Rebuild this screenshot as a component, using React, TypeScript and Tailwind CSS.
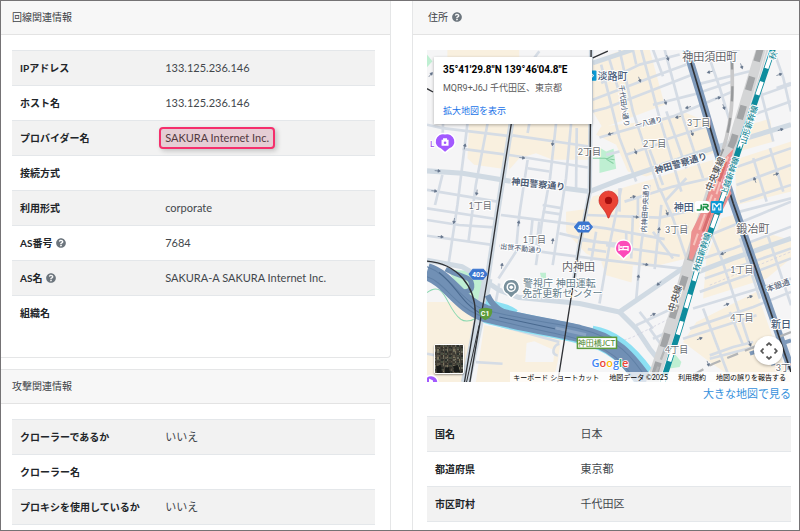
import React from "react";
import { FaQuestionCircle } from "react-icons/fa";

type Row = {
  label: string;
  value?: string;
  help?: boolean;
  highlight?: boolean;
};

const LINE_ROWS: Row[] = [
  { label: "IPアドレス", value: "133.125.236.146" },
  { label: "ホスト名", value: "133.125.236.146" },
  { label: "プロバイダー名", value: "SAKURA Internet Inc.", highlight: true },
  { label: "接続方式" },
  { label: "利用形式", value: "corporate" },
  { label: "AS番号", value: "7684", help: true },
  { label: "AS名", value: "SAKURA-A SAKURA Internet Inc.", help: true },
  { label: "組織名" },
];

const ATTACK_ROWS: Row[] = [
  { label: "クローラーであるか", value: "いいえ" },
  { label: "クローラー名" },
  { label: "プロキシを使用しているか", value: "いいえ" },
];

const ADDRESS_ROWS: Row[] = [
  { label: "国名", value: "日本" },
  { label: "都道府県", value: "東京都" },
  { label: "市区町村", value: "千代田区" },
];

// Map geometry is drawn at three units per pixel.
const BEIGE_BLOCKS = [
  "85,15 300,15 300,40 85,40",
  "150,237 272,237 250,372 165,360 145,340",
  "278,237 508,237 508,345 400,345 350,325 300,340 270,375 268,300",
  "520,110 520,50 610,15 690,15 735,180 550,250 520,200",
  "545,245 640,235 800,205 870,235 885,300 880,325 680,395 625,380 590,300 530,270",
  "440,500 500,492 520,455 690,405 880,345 885,410 800,640 700,665 560,655 500,625 440,560",
  "545,650 640,662 636,712 560,690",
  "970,245 1050,222 1062,290 955,320",
  "945,345 1113,290 1113,440 950,480",
  "905,520 940,510 985,590 1060,570 1113,585 1113,640 1040,700 850,760 860,640",
  "830,830 1010,740 1060,880 1113,1011 960,1011 870,950 790,890",
  "24,770 110,770 165,812 165,900 130,1011 24,1011",
  "195,840 425,880 415,950 400,1011 170,1011",
];

const MINOR_ROADS = [
  // west grid
  "M145,237 L115,480 L88,660",
  "M205,237 L170,420 L148,590",
  "M72,237 L70,300",
  "M70,390 L48,480",
  "M330,237 L325,265",
  "M410,237 L392,400 L368,530 L350,660",
  "M455,237 L440,400 L400,660",
  "M360,20 L330,60",
  "M325,345 L300,510 L290,620 L238,700",
  "M340,520 L330,620",
  "M360,530 L352,600",
  "M472,250 L470,430",
  "M24,435 L235,470",
  "M24,490 L230,522",
  "M24,525 L120,540 L225,547",
  "M24,572 L225,600",
  "M24,240 L70,250 L280,275",
  "M130,312 L280,332 L505,368",
  "M280,272 L510,305",
  "M325,370 L390,380",
  "M370,480 L430,490",
  "M370,500 L425,508",
  "M245,510 L400,530 L560,550 L735,582",
  "M240,602 L400,625 L560,645 L800,672",
  "M420,565 L530,590 L620,600",
  // south of the main street
  "M605,430 L570,600 L540,775",
  "M690,420 L665,600 L650,760",
  "M725,480 L705,672",
  "M530,560 L515,650",
  "M485,585 L620,600 L620,560",
  "M600,430 L600,500",
  "M640,510 L635,640",
  "M500,510 L720,518 L800,500",
  "M560,600 L780,632",
  "M505,612 L560,620",
  "M760,640 L700,560",
  "M720,430 L760,520 L800,640",
  "M800,400 L735,470",
  "M615,470 L760,425 L870,400",
  "M655,455 L655,510",
  // north centre
  "M545,60 L600,280 L650,410",
  "M600,15 L640,200 L720,440",
  "M665,15 L720,220 L785,440",
  "M735,15 L790,220 L850,400",
  "M640,15 L650,60",
  "M570,45 L595,130",
  "M520,165 L690,100 L800,60",
  "M545,115 L660,60 L780,30",
  "M520,200 L560,190 L740,120 L830,85",
  "M540,278 L760,215 L870,170 L940,140",
  "M700,15 L730,95",
  "M720,290 L860,245",
  "M620,330 L740,290",
  "M860,15 L900,130 L930,230",
  "M810,30 L960,15",
  "M830,120 L990,80",
  "M700,180 L820,150 L940,110",
  "M560,330 L600,320",
  "M740,200 L800,370",
  "M690,315 L730,420",
  // east of the tracks
  "M1070,130 L1113,115",
  "M1060,15 L1090,100 L1113,200",
  "M1000,160 L1113,120",
  "M985,215 L1113,170",
  "M1020,130 L1060,290",
  "M940,370 L1113,310",
  "M950,420 L1113,360",
  "M960,470 L1113,420",
  "M1000,340 L1040,470",
  "M1050,310 L1090,440",
  "M960,500 L1113,460",
  "M870,570 L1113,470",
  "M850,640 L940,610 L1113,545",
  "M855,700 L1113,610",
  "M840,740 L980,690 L1113,640",
  "M820,790 L1113,700",
  "M810,850 L1000,785 L1113,740",
  "M790,880 L900,845 L1010,810",
  "M870,940 L1060,890",
  "M860,530 L905,640 L990,900",
  "M960,580 L1020,760",
  "M850,790 L930,1000",
  "M1040,560 L1113,780",
  "M930,800 L970,900",
  "M870,930 L940,905 L1000,890",
  // south
  "M650,840 L800,770",
  "M690,850 L740,920",
  "M700,880 L790,840",
  "M660,800 L700,850",
  "M24,925 L50,930",
  "M170,950 L250,955",
  "M240,840 L420,890",
  "M420,895 C400,900 395,930 415,930",
  "M240,715 L230,770",
];

const MAJOR_ROADS = [
  "M24,378 L130,385 L280,410 L510,440 L600,405 L880,310 L1113,240",
  "M210,715 L240,735 L300,757 L480,775 L600,800 L680,745 L810,655 L850,580",
  "M600,800 L650,850 L690,910 L730,960",
  "M810,690 L940,640 L1113,580",
  "M24,645 L130,665 L215,715",
];

const ARROWS: [number, number, number][] = [
  [56, 378, 5], [46, 438, 6], [65, 575, 6], [309, 339, 6], [137, 305, -80], [400, 295, 98], [173, 443, 98],
  [105, 528, 98], [298, 535, -82], [400, 588, -82], [248, 662, -82], [640, 456, -14], [649, 516, 4], [678, 658, 8],
  [718, 555, -82], [656, 697, -82], [744, 40, 70], [660, 105, 70], [737, 172, 70], [573, 267, 165], [648, 320, 70],
  [775, 217, 165], [805, 188, 165], [870, 82, 165], [895, 160, -15], [912, 187, 70], [817, 265, 70], [965, 65, 70],
  [1078, 90, -18], [1082, 255, -16], [1005, 405, -110], [1068, 388, -16], [742, 503, 70], [800, 545, 70], [910, 625, 160],
  [718, 715, 140], [700, 808, -25], [840, 880, -20], [920, 778, -20], [865, 955, 70], [990, 895, 70], [990, 755, -20],
  [35, 90, -50],
];

type MapLabelProps = {
  x: number;
  y: number;
  text: string;
  rotate?: number;
  className?: string;
};

const MapLabel: React.FC<MapLabelProps> = ({ x, y, text, rotate = 0, className = "text-[9px] fill-[#6b6f75]" }) => (
  <text
    x={x}
    y={y}
    textAnchor="middle"
    dominantBaseline="central"
    transform={`rotate(${rotate} ${x} ${y})`}
    stroke="#fff"
    strokeWidth={2}
    strokeLinejoin="round"
    paintOrder="stroke"
    className={className}
  >
    {text}
  </text>
);

const CHOME: [number, number, string][] = [
  [271, 73, "3丁目"], [227, 94, "2丁目"], [162, 102, "2丁目"], [53, 156, "1丁目"], [107, 189, "1丁目"],
  [249, 179, "3丁目"], [314, 219, "1丁目"], [314, 267, "4丁目"], [249, 299, "4丁目"], [355, 317, "3丁"],
];

const AREA = "text-[11px] fill-[#5f6368]";
const STREET = "text-[9px] font-bold fill-[#4b5b73]";
const LANE = "text-[7px] font-medium fill-[#5d6b80]";
const RAIL = "text-[9px] font-medium fill-[#555]";
const SHINKANSEN = "text-[8px] font-medium fill-[#1a8a98]";

const MapCanvas: React.FC = () => (
  <svg viewBox="0 0 363 332" preserveAspectRatio="xMidYMid slice" className="block h-[332px] w-full" aria-hidden="true">
    <rect width="363" height="332" fill="#f5f5f6" />
    <g transform="scale(0.33333) translate(-24 -15)" fill="none" strokeLinejoin="round">
      {BEIGE_BLOCKS.map((points) => (
        <polygon key={points} points={points} fill="#f9f0df" />
      ))}
      <path d="M322,893 L345,888 L405,915 L402,950 L318,950 Z" fill="#f5f5f6" />

      {/* parks */}
      <g fill="#bfefd2">
        <path d="M540,308 L560,320 L582,312 L590,372 L540,384 Z" />
        <path d="M85,672 L180,680 L190,700 L182,775 L130,745 Z" />
        <path d="M24,30 L40,50 L24,68 Z" />
        <path d="M362,683 L380,683 L380,702 L366,700 Z" />
        <path d="M765,925 L785,950 L780,965 L745,970 Z" />
      </g>
      <path d="M520,340 H555 L585,345 M560,343 L582,332 M560,343 L582,356" stroke="#85cfa2" strokeWidth="3" />

      <g stroke="#d5dce5" strokeWidth="8">
        {MINOR_ROADS.map((d) => (
          <path key={d} d={d} />
        ))}
      </g>
      <g stroke="#d0dae3" strokeWidth="15">
        {MAJOR_ROADS.map((d) => (
          <path key={d} d={d} />
        ))}
      </g>
      <g stroke="#d0dae3" strokeWidth="20">
        <path d="M282,200 L235,500 L205,700 L145,1011" strokeWidth="17" />
        <path d="M205,700 L178,830 L140,1011" strokeWidth="30" />
        <path d="M515,15 L511,440 L480,600 L458,740" strokeWidth="13" />
        <path d="M520,55 L640,15" strokeWidth="14" />
      </g>
      <path d="M600,890 L640,875 L760,815 M870,720 L1113,620" stroke="#ccd" strokeWidth="2" strokeDasharray="8 6" />

      {/* river and expressway */}
      <path d="M80,672 C130,700 160,690 158,725 C156,742 130,742 122,735" stroke="#7190b3" strokeWidth="15" />
      <path d="M24,742 C80,700 80,790 125,822 C140,832 155,828 172,818" stroke="#8bd8b0" strokeWidth="3" />
      <path d="M200,770 C260,785 275,790 290,802 M520,850 C590,860 650,920 690,975" stroke="#8ce0f3" strokeWidth="18" />
      <path d="M200,806 C320,840 420,850 480,868 C580,888 630,935 690,1030" stroke="#8ce0f3" strokeWidth="55" />
      <path d="M24,680 C90,700 120,780 200,805 C320,835 420,850 480,865 C580,885 625,935 690,1030" stroke="#7190b5" strokeWidth="52" />
      <path d="M205,750 C222,785 240,795 275,812" stroke="#7190b3" strokeWidth="18" />
      <path
        d="M24,665 C95,690 125,770 200,795 C320,825 420,835 480,850 C590,875 640,930 700,1030 M24,695 C80,712 110,790 195,815 C320,850 410,862 470,880 C570,905 610,945 665,1030"
        stroke="#6080a6"
        strokeWidth="3"
      />
      <path d="M60,682 C110,720 130,775 180,802 M240,815 L440,858" stroke="#48688e" strokeWidth="3" />
      <path d="M408,848 L500,868" stroke="#8aa4c4" strokeWidth="9" />

      {/* highway to the east */}
      <path d="M800,15 L845,160 L892,320 L940,475 L1025,720 L1113,970" stroke="#7f9abb" strokeWidth="23" />
      <path d="M990,925 L1113,885 M1050,900 L1060,960" stroke="#7f9abb" strokeWidth="12" />

      {/* subway lines */}
      <g stroke="#303236" strokeWidth="4">
        <path d="M282,200 L235,500 L205,700 L152,1011" />
        <path d="M24,648 C110,655 175,720 168,820 L136,1011" />
        <path d="M180,840 L142,1011" strokeWidth="3" />
        <path d="M515,15 L511,440 L480,600 L415,1011" />
        <path d="M520,40 L565,20 M24,132 L42,142" />
        <path d="M805,25 L892,320 L940,475 L1025,720 L1113,980" strokeWidth="5" />
      </g>

      {/* JR tracks */}
      <path d="M936,15 C936,120 950,210 895,360" stroke="#c9c9ca" strokeWidth="11" />
      <path d="M936,30 C936,120 950,210 895,360" stroke="#97999b" strokeWidth="7" strokeDasharray="45 50" />
      <path d="M1028,10 L940,300 L880,430 L810,650 L765,810 L695,1020" stroke="#d4d5d6" strokeWidth="36" />
      <path d="M1022,10 L940,290 L880,430 L810,650 L760,810 L695,1020" stroke="#a2a4a6" strokeWidth="20" strokeDasharray="42 48" />
      <path d="M1040,10 L955,310 M830,670 L760,900" stroke="#e8e9ea" strokeWidth="3" />
      <path d="M736,910 L695,1020 M1113,860 L880,955 L800,1000" stroke="#b3b5b7" strokeWidth="7" strokeDasharray="35 22" />
      <path d="M942,310 L918,405 L935,445 L890,530 L870,585 L832,612 L817,645 L808,640 L815,560 L855,480 L888,370 Z" fill="#ec9291" />
      <path d="M925,335 L880,440 L822,600 M905,400 L855,560" stroke="#f7c3bd" strokeWidth="6" strokeDasharray="50 12" />
      <path d="M882,470 L850,560 M918,350 L898,410" stroke="#d86d70" strokeWidth="9" />
      <path d="M1062,5 L960,305 L915,440 L835,665 L780,850 L726,1020" stroke="#0d8c9d" strokeWidth="17" />
      <path d="M1062,5 L960,305 L915,440 L835,665 L780,850 L726,1020" stroke="#fff" strokeWidth="12" strokeDasharray="42 42" strokeDashoffset="-28" />
      <path d="M960,305 L915,440" stroke="#0d8c9d" strokeWidth="5" />

      {ARROWS.map(([x, y, angle]) => (
        <path
          key={`${x}-${y}`}
          d="M-9,0 H5 M1,-4 L8,0 L1,4 Z"
          transform={`translate(${x} ${y}) rotate(${angle})`}
          fill="#64748b"
          stroke="#64748b"
          strokeWidth="2"
        />
      ))}
    </g>

    <g>
      {CHOME.map(([x, y, text]) => (
        <MapLabel key={`${x}-${y}`} x={x} y={y} text={text} />
      ))}
      <MapLabel x={185} y={26} text="淡路町" className="text-[10px] font-medium fill-[#465a78]" />
      <MapLabel x={282} y={7} text="神田須田町" className={AREA} />
      <MapLabel x={325} y={178} text="鍛冶町" className={AREA} />
      <MapLabel x={151} y={216} text="内神田" className={AREA} />
      <MapLabel x={353} y={274} text="新日" className="text-[10px] font-medium fill-[#465a78]" />
      <MapLabel x={132} y={233} text="警視庁 神田運転" className="text-[10px] fill-[#657d8a]" />
      <MapLabel x={135} y={243} text="免許更新センター" className="text-[10px] fill-[#657d8a]" />
      <MapLabel x={111} y={134} text="神田警察通り" rotate={6} className={STREET} />
      <MapLabel x={253} y={113} text="神田警察通り" rotate={-16} className={STREET} />
      <MapLabel x={221} y={72} text="一八通り" rotate={-14} className={LANE} />
      <MapLabel x={197} y={56} text="千代田小通り" rotate={82} className={LANE} />
      <MapLabel x={217} y={158} text="内神田中央通り" rotate={-87} className={LANE} />
      <MapLabel x={94} y={198} text="出世不動通り" rotate={6} className={LANE} />
      <MapLabel x={350} y={235} text="本銀通" rotate={-20} className="text-[8px] font-medium fill-[#5d6b80]" />
      <MapLabel x={287} y={124} text="中央東線" rotate={-67} className={RAIL} />
      <MapLabel x={247} y={248} text="中央線" rotate={-73} className={RAIL} />
      <MapLabel x={321} y={75} text="山形新幹線" rotate={-72} className={SHINKANSEN} />
      <MapLabel x={302} y={126} text="上越新幹線" rotate={-71} className={SHINKANSEN} />
      <MapLabel x={274} y={202} text="秋田新幹線" rotate={-72} className={SHINKANSEN} />
      <MapLabel x={345} y={6} text="秋" rotate={-70} className={SHINKANSEN} />
      <MapLabel x={5} y={94} text="L" className="text-[8px] font-medium fill-[#9a4de8]" />
    </g>

    {/* station marks */}
    <rect x="163" y="21" width="6" height="10" rx="1" fill="#0c9ad6" />
    <path d="M164 24 L166 26 L164 28" stroke="#fff" fill="none" />
    <MapLabel x={256} y={157} text="神田" className="text-[10px] font-medium fill-[#465a78]" />
    <rect x="267" y="151" width="15" height="12" rx="3" fill="#fff" />
    <path d="M273.500 154.500 V158.500 Q273.500 160 272 160 H269 M275.500 160.500 V157 H279 Q280.300 157 280.300 155.800 Q280.300 154.500 279 154.500 H275 M277.500 157 L281 160.500" stroke="#1b9045" strokeWidth="1.600" fill="none" />
    <rect x="283" y="151" width="12" height="12" rx="1" fill="#0c9ad6" />
    <path d="M287.500 160 H285 V154 H287 L289 156.500 L291 154 H293 V160 H290.500 M287 157.500 V160 M291 157.500 V160" stroke="#fff" strokeWidth="1.200" fill="none" />

    {/* route shields */}
    <g fill="#3b76d0" stroke="#3b76d0" strokeLinejoin="round">
      <path d="M151 172 H161 L165 177 L161 182 H151 L147 177 Z" />
      <path d="M46 219 H56 L60 224 L56 229 H46 L42 224 Z" />
    </g>
    <path d="M52 259 Q58 256 65 259 Q66 267 58 270 Q51 267 52 259 Z" fill="#5d9c3c" />
    <g textAnchor="middle" dominantBaseline="central" className="fill-white font-['Roboto',sans-serif] text-[7px] font-bold">
      <text x="156" y="177">405</text>
      <text x="51" y="224">402</text>
      <text x="58" y="263">C1</text>
    </g>
    <rect x="150" y="287" width="39" height="11" fill="#fff" stroke="#5d9c3c" strokeWidth="1.500" />
    <text x="169" y="293" textAnchor="middle" dominantBaseline="central" className="fill-[#4f8a31] text-[8px]">
      神田橋JCT
    </text>

    {/* place markers */}
    <g stroke="#fff" strokeWidth="1.500">
      <path d="M18 84 A8 8 0 0 1 22 99.500 L18 103 L14 99.500 A8 8 0 0 1 18 84 Z" fill="#a259ff" />
      <path d="M196 190 A8 8 0 0 1 200 205 L196 209 L192 205 A8 8 0 0 1 196 190 Z" fill="#fc4bb9" />
      <path d="M84 229 A8 8 0 0 1 88 244 L84 248 L80 244 A8 8 0 0 1 84 229 Z" fill="#78909c" />
      <circle cx="4" cy="332" r="7" fill="#a259ff" />
    </g>
    <path d="M14.500 90 H21.500 V96 H14.500 Z M16 88.500 H20 V90 H16 Z" fill="#fff" />
    <circle cx="18" cy="93" r="1.300" fill="#a259ff" />
    <path d="M191.500 194.500 V201 M191.500 199.500 H200.500 M200.500 201 V196.500 H195.500 V199" stroke="#fff" strokeWidth="1.300" fill="none" />
    <circle cx="193.500" cy="197" r="1" fill="#fff" />
    <circle cx="84" cy="237" r="4" fill="none" stroke="#fff" strokeWidth="1.500" />
    <circle cx="84" cy="237" r="1.800" fill="#fff" />
    <path d="M2 332 V328 L6 330 V332" fill="#fff" />

    <path
      d="M181 141 A9.500 9.500 0 0 1 190.500 150.500 C190.500 157 184 159 181.500 168 H180.500 C178 159 171.500 157 171.500 150.500 A9.500 9.500 0 0 1 181 141 Z"
      fill="#ea4335"
      stroke="#c5221f"
      strokeWidth="0.600"
    />
    <circle cx="181" cy="150.500" r="3.600" fill="#a50e0e" />

    <text x="164" y="317" stroke="#fff" strokeWidth="1.500" paintOrder="stroke" className="font-['Open_Sans',sans-serif] text-[11px] font-semibold">
      <tspan fill="#4285f4">G</tspan>
      <tspan fill="#ea4335">o</tspan>
      <tspan fill="#fbbc05">o</tspan>
      <tspan fill="#4285f4">g</tspan>
      <tspan fill="#34a853">l</tspan>
      <tspan fill="#ea4335">e</tspan>
    </text>
  </svg>
);

const SATELLITE_COLORS = ["#3f3c33", "#5d584a", "#2b302c", "#7d765f", "#4a5042", "#6a6b5d", "#35312b"];

const SatelliteThumb: React.FC = () => (
  <svg viewBox="0 0 28 28" className="block h-full w-full" aria-hidden="true">
    <rect width="28" height="28" fill="#45423a" />
    {Array.from({ length: 196 }, (_, i) => (
      <rect
        key={i}
        x={(i % 14) * 2}
        y={Math.floor(i / 14) * 2}
        width={1 + ((i * 5) % 2)}
        height={1 + ((i * 7) % 3)}
        fill={SATELLITE_COLORS[(i * i * 3 + i * 11 + (i >> 3)) % 7]}
      />
    ))}
    <path d="M1 21 L6 20 L7 28 H2 Z M10 23 L14 22 L15 28 H10 Z M18 21 L23 20 L25 27 H19 Z" fill="#191b19" />
  </svg>
);

const MapView: React.FC = () => (
  <div className="relative overflow-hidden">
    <MapCanvas />
    <div className="absolute left-[7px] top-[7px] h-[67px] w-[158px] bg-white px-[9px] pt-[6px] font-['Roboto','Noto_Sans_CJK_JP',sans-serif] shadow-[0_1px_3px_rgba(0,0,0,0.3)]">
      <p className="whitespace-nowrap text-[10px] leading-[14px] font-bold text-black">35°41'29.8"N 139°46'04.8"E</p>
      <p className="mt-[4px] whitespace-nowrap text-[9px] leading-[14px] text-[#5b5b5b]">MQR9+J6J 千代田区、東京都</p>
      <a href="#map" className="mt-[9px] block text-[9px] leading-[14px] text-[#1a73e8]">
        拡大地図を表示
      </a>
    </div>
    <button
      type="button"
      aria-label="航空写真"
      className="absolute bottom-[8px] left-[7px] h-[30px] w-[30px] overflow-hidden rounded-[2px] border border-white shadow-[0_1px_2px_rgba(0,0,0,0.4)]"
    >
      <SatelliteThumb />
    </button>
    <button
      type="button"
      aria-label="地図のカメラ コントロール"
      className="absolute right-[8px] bottom-[17px] flex h-[29px] w-[29px] items-center justify-center rounded-full bg-white shadow-[0_1px_3px_rgba(0,0,0,0.3)]"
    >
      <svg viewBox="0 0 18 18" className="h-[18px] w-[18px]" fill="none" stroke="#555" strokeWidth="1.8" aria-hidden="true">
        <path d="M6.500 3.500 L9 1.200 L11.500 3.500 M6.500 14.500 L9 16.800 L11.500 14.500 M3.500 6.500 L1.200 9 L3.500 11.500 M14.500 6.500 L16.800 9 L14.500 11.500" />
      </svg>
    </button>
    <div className="absolute right-0 bottom-0 flex gap-[10px] bg-white/75 pr-[5px] pl-[3px] text-[7px] leading-[10px] whitespace-nowrap text-black">
      <button type="button">キーボード ショートカット</button>
      <span>地図データ ©2025</span>
      <a href="#terms">利用規約</a>
      <a href="#report">地図の誤りを報告する</a>
    </div>
  </div>
);

const HelpIcon: React.FC = () => <FaQuestionCircle className="ml-[4px] inline-block h-[10px] w-[10px] align-[-1px] text-[#6c757d]" />;

const InfoTable: React.FC<{ rows: Row[] }> = ({ rows }) => (
  <table className="w-full table-fixed border-collapse">
    <tbody>
      {rows.map((row) => (
        <tr key={row.label} className="h-[35px] border-y border-[#e4e7ea] odd:bg-[#f2f2f2] last:even:border-b-0">
          <th scope="row" className="w-2/5 px-[8px] text-left text-[10px] leading-[16px] font-bold whitespace-nowrap text-[#212529]">
            {row.label}
            {row.help && <HelpIcon />}
          </th>
          <td className="px-[8px] text-[11px] leading-[16px] whitespace-nowrap text-[#42474c]">
            {row.highlight ? (
              <mark className="-ml-[6px] inline-block rounded-[4px] border-2 border-[#f52f6c] bg-[#e5cdd4] px-[4px] py-px text-[#52393f] shadow-[2px_2px_5px_rgba(0,0,0,0.2)]">
                {row.value}
              </mark>
            ) : (
              row.value
            )}
          </td>
        </tr>
      ))}
    </tbody>
  </table>
);

const CardHeader: React.FC<{ children: React.ReactNode }> = ({ children }) => (
  <h2 className="h-[34px] border-b border-[#e3e3e3] bg-[#f7f7f7] text-[10px] leading-[32px] text-[#3d4246]">{children}</h2>
);

export default function App() {
  return (
    <main className="grid h-screen grid-cols-[390fr_387fr] gap-[21px] overflow-hidden border border-[#757375] bg-white font-['Lato','Noto_Sans_CJK_JP',sans-serif]">
      <div className="flex min-h-0 flex-col gap-[11px]">
        <section className="shrink-0 rounded-br-[4px] border-r border-b border-[#e5e6e7]">
          <CardHeader>
            <span className="pl-[11px]">回線関連情報</span>
          </CardHeader>
          <div className="pt-[15px] pr-[15px] pb-[26px] pl-[11px]">
            <InfoTable rows={LINE_ROWS} />
          </div>
        </section>
        <section className="flex-1 rounded-tr-[4px] border-t border-r border-[#e5e6e7]">
          <CardHeader>
            <span className="pl-[11px]">攻撃関連情報</span>
          </CardHeader>
          <div className="pt-[15px] pr-[15px] pl-[11px]">
            <InfoTable rows={ATTACK_ROWS} />
          </div>
        </section>
      </div>

      <section className="border-l border-[#e5e6e7]">
        <CardHeader>
          <span className="pl-[15px]">
            住所
            <HelpIcon />
          </span>
        </CardHeader>
        <div className="pt-[15px] pr-[8px] pl-[14px]">
          <MapView />
          <div className="h-[34px] text-right text-[11px] leading-[24px]">
            <a href="#large-map" className="text-[#3490dc]">
              大きな地図で見る
            </a>
          </div>
          <InfoTable rows={ADDRESS_ROWS} />
        </div>
      </section>
    </main>
  );
}
